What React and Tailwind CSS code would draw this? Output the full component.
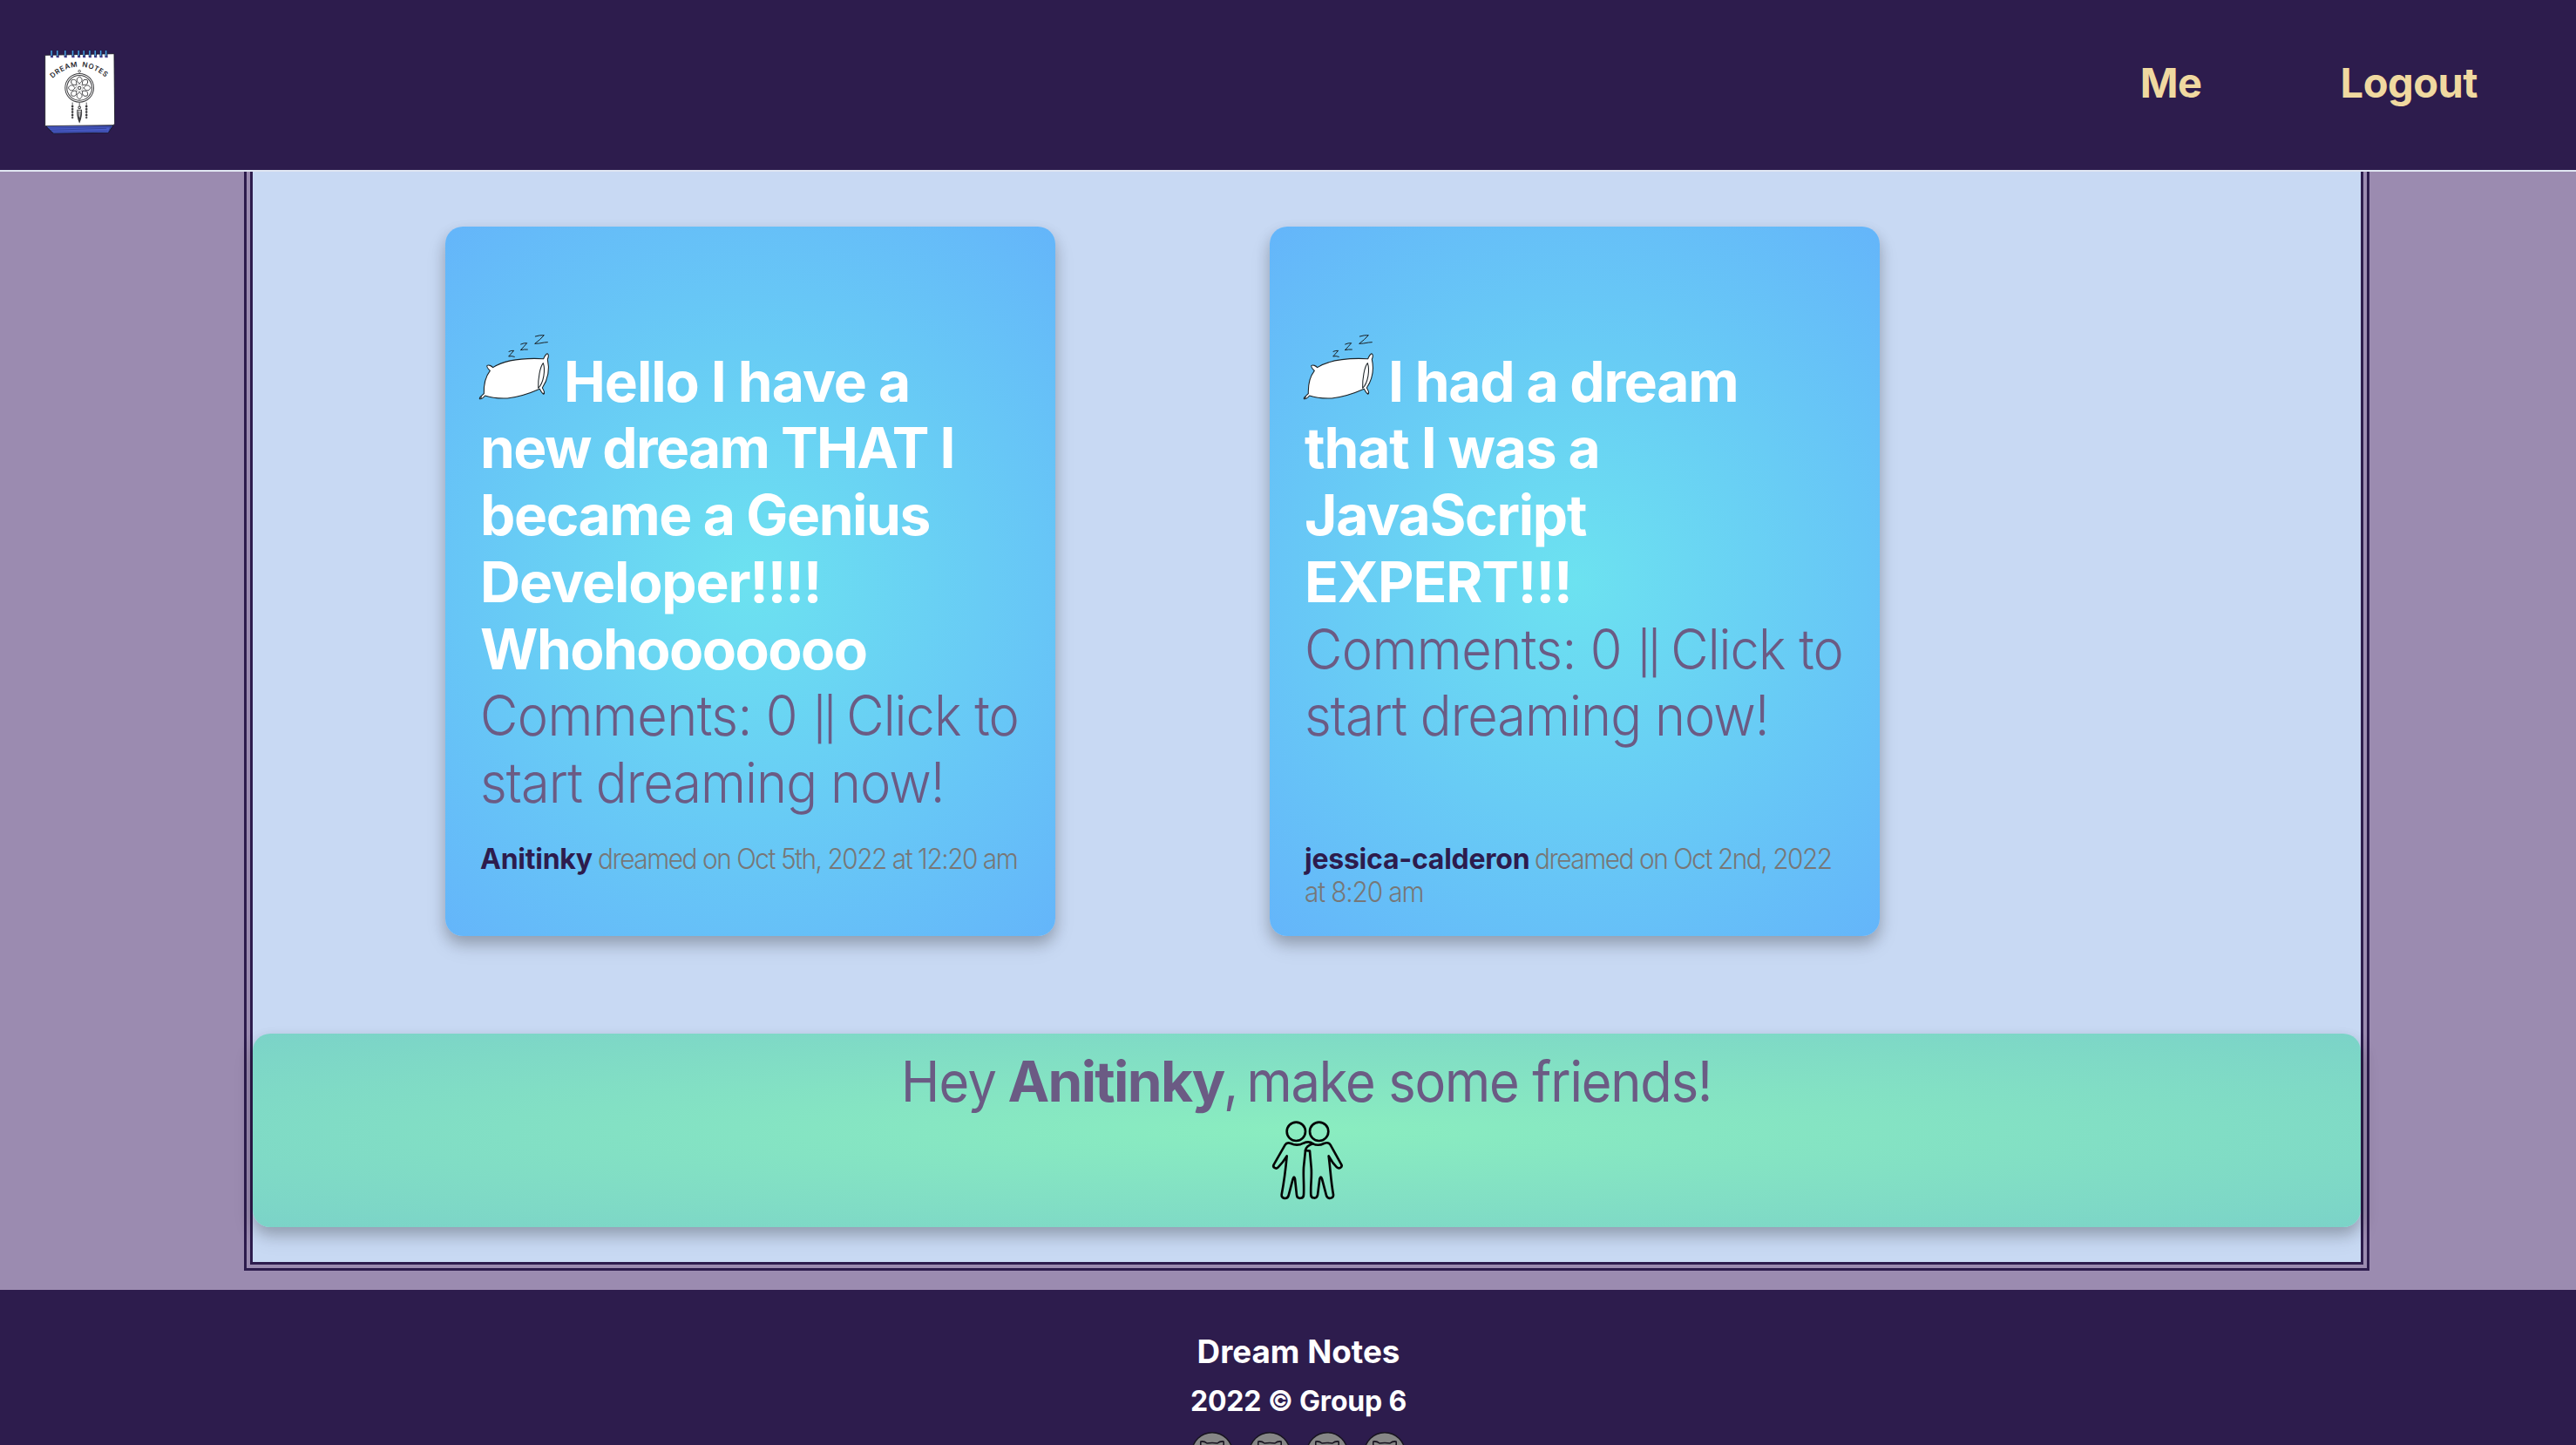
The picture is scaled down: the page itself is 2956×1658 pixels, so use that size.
function Logo() {
  const rings = [178, 198, 225, 251, 271, 289, 309, 328, 347, 365];
  return (
    <svg viewBox="150 168 248 296" className="block h-[99px] w-[83px]" aria-label="Dream Notes">
      <path d="M154 430 L184 459 L372 456 L390 430Z" fill="#4a5cc8" stroke="#1a1a33" strokeWidth="3" />
      <path d="M166 440 L384 436 M174 447 L366 441 M180 453 L370 450 M372 455 L380 434" stroke="#2a3788" strokeWidth="2" fill="none" />
      <path d="M155 190 L392 185 L394 425 L389 430 L155 433Z" fill="#fff" stroke="#1c1c28" strokeWidth="2.5" />
      {rings.map((x) => (
        <g key={x}>
          <path d={`M${x} 172 V196`} stroke="#1d2350" strokeWidth="9" />
          <path d={`M${x - 1} 174 V192`} stroke="#4a9fe0" strokeWidth="4.5" />
          <path d={`M${x - 4} 196 h9`} stroke="#4d4a9c" strokeWidth="5" />
        </g>
      ))}
      <path id="arc" d="M181 270 Q272 186 374 275" fill="none" />
      <text fontFamily="Inter, sans-serif" fontSize="24" fontWeight="600" fill="#26262c" wordSpacing="5" letterSpacing="2.2">
        <textPath href="#arc">DREAM NOTES</textPath>
      </text>
      <g fill="none" stroke="#3c3c3f">
        <circle cx="273" cy="245" r="4" strokeWidth="2.5" />
        <circle cx="273" cy="302" r="49" strokeWidth="3" />
        <circle cx="273" cy="302" r="43" strokeWidth="3" />
        <circle cx="273" cy="302" r="5" strokeWidth="3" />
        <circle cx="273" cy="302" r="12" strokeWidth="2" strokeDasharray="3 2" />
        {[0, 45, 90, 135, 180, 225, 270, 315].map((a) => (
          <path key={a} d="M273 287 C258 277 265 267 273 264 C281 267 288 277 273 287Z" strokeWidth="2.8" transform={`rotate(${a} 273 302)`} />
        ))}
        <path d="M249 352 V408 M297 352 V408 M273 352 V366" strokeWidth="2.5" />
        <path d="M249 362 V406 M297 362 V406" strokeWidth="7" strokeDasharray="6 4" />
        <circle cx="273" cy="369" r="4" strokeWidth="3" />
        <path d="M266 378 H280 Q282 398 273 420 Q264 398 266 378Z M270 382 Q268 398 273 412 Q278 398 276 382" strokeWidth="3" />
      </g>
    </svg>
  );
}

function Pillow() {
  return (
    <svg viewBox="156 30 240 240" className="mr-[2px] inline-block size-20 overflow-visible align-baseline" aria-hidden="true">
      <g fill="#fff" stroke="#1b2226" strokeWidth="3.2" strokeLinejoin="round" strokeLinecap="round">
        <path d="M200 152 C195 146 185 142 180 145 C177 149 184 157 190 163 C172 186 168 214 169 242 C164 248 152 254 154 260 C161 262 168 255 173 249 C198 258 224 259 250 258 C290 254 325 242 361 226 C364 232 369 241 374 244 C380 242 376 232 370 222 C390 192 395 155 388 124 C391 117 392 107 387 104 C381 106 378 114 374 122 C312 119 245 123 200 152Z" />
        <path d="M373 137 C362 150 355 190 356 223 C375 205 381 160 373 137Z" />
      </g>
      <path d="M154 259 L160 252 L163 256Z M371 243 L376 236 L376 243Z" fill="#1b2226" />
      <g fill="none" stroke="#1b2226" strokeWidth="3" strokeLinecap="round" strokeLinejoin="round">
        <path d="M255 97 Q264 93 272 94 L254 114 Q264 111 274 115" />
        <path d="M296 72 Q307 67 317 68 Q306 81 295 92 Q307 89 319 90" />
        <path d="M346 45 Q361 40 376 41 Q362 57 344 70 Q358 70 376 66 L388 65" />
      </g>
    </svg>
  );
}

function Friends() {
  return (
    <svg viewBox="36 36 288 288" className="mt-[2px] block size-24" fill="none" stroke="#050505" strokeWidth="8" strokeLinejoin="round" strokeLinecap="round" aria-hidden="true">
      <circle cx="142" cy="85" r="32" />
      <circle cx="221" cy="85" r="32" />
      <path d="M200 127 C190 119 178 120 167 125 C150 134 136 132 124 126 C116 123 108 124 104 131 L65 199 C60 208 72 216 80 208 C92 196 101 184 110 169 C106 215 100 260 92 302 C90 317 112 320 116 305 L131 248 Q135 236 138 248 L144 304 C146 319 168 317 168 303 C170 270 166 240 168 208 L174 150" />
      <path d="M200 127 C212 133 226 132 238 126 C248 122 256 124 260 131 L298 199 C302 208 290 215 282 208 C270 196 262 184 254 169 C260 215 262 260 270 302 C272 317 250 319 246 305 L231 248 Q227 236 223 248 L216 304 C213 318 193 316 193 303 C191 270 197 240 194 208 L189 152 L174 150 C176 138 188 131 200 127Z" />
    </svg>
  );
}

function GithubMark() {
  return (
    <svg viewBox="0 0 48 48" className="block size-12" aria-hidden="true">
      <circle cx="24" cy="24" r="23.3" fill="#868686" stroke="#17131f" strokeWidth="1.4" />
      <path d="M11 11 Q10.500 13 11 16 Q8 20 9 26 Q11 33 19 34 L18 46 H30 L29 34 Q37 33 39 26 Q40 20 37 16 Q37.500 13 37 11 Q33 10.500 30 13 Q24 12 18 13 Q15 10.500 11 11Z" fill="#868686" stroke="#17131f" strokeWidth="1.6" />
    </svg>
  );
}

function Card({ title, author, firstWhen, secondWhen }) {
  return (
    <article className="flex h-[814px] w-[700px] flex-col rounded-[20px] bg-[radial-gradient(circle,#6ce2f0_0%,#64b5fa_100%)] px-10 pt-[120.5px] pb-[30px] whitespace-nowrap shadow-[0_8px_16px_rgba(0,0,0,0.2),0_12px_24px_rgba(0,0,0,0.1)]">
      <h2 className="text-[64px] leading-[76.8px] font-bold text-white">
        {title.map(([text, tracking], i) => (
          <div key={text} className={tracking}>
            {i === 0 && <><Pillow />{" "}</>}{text}
          </div>
        ))}
      </h2>
      <div className="w-max origin-left scale-x-[0.93] text-[64px] leading-[76.8px] font-light text-[#6b5b84]">
        <div className="tracking-[-1px]">
          <span className="tracking-[-0.6px]">Comments: 0 </span>
          <span className="inline-block translate-y-[4px] scale-y-75 tracking-[-7px]">||</span>
          {" "}Click to
        </div>
        <div className="tracking-[-1px]">start dreaming now!</div>
      </div>
      <div className="mt-auto h-[77px] text-[32px] leading-[38.4px] font-light text-[#777]">
        <div className="flex gap-[6px]">
          <span className="font-bold tracking-[-0.25px] text-[#2d1c4d]">{author}</span>
          <span className="origin-left scale-x-[0.93] tracking-[-1.55px]">{firstWhen}</span>
        </div>
        {secondWhen && <div className="w-max origin-left scale-x-[0.93] tracking-[-1.2px]">{secondWhen}</div>}
      </div>
    </article>
  );
}

const dreams = [
  {
    title: [
      ["Hello I have a", "tracking-[-1.05px]"],
      ["new dream THAT I", "tracking-[-1.6px]"],
      ["became a Genius", "tracking-[-1.4px]"],
      ["Developer!!!!", "tracking-[-1.15px]"],
      ["Whohooooooo", "tracking-[-1.5px]"],
    ],
    author: "Anitinky",
    firstWhen: "dreamed on Oct 5th, 2022 at 12:20 am",
  },
  {
    title: [
      ["I had a dream", "tracking-[-1.2px]"],
      ["that I was a", "tracking-[-1.1px]"],
      ["JavaScript", "tracking-[-1.25px]"],
      ["EXPERT!!!", "tracking-[-1.06px]"],
    ],
    author: "jessica-calderon",
    firstWhen: "dreamed on Oct 2nd, 2022",
    secondWhen: "at 8:20 am",
  },
];

export default function App() {
  return (
    <div className="flex h-[1658px] w-[2956px] flex-col overflow-hidden bg-[#9b8bb0] font-['Inter',sans-serif]">
      <header className="flex h-[197px] shrink-0 items-start justify-between border-b-2 border-[#e0e6f2] bg-[#2d1c4d] pl-[50px]">
        <div className="pt-14"><Logo /></div>
        <nav className="flex gap-[159px] pt-[66px] pr-[113px] text-[47px] leading-[58px] font-bold tracking-[-0.5px] text-[#f0d9a0]">
          <a>Me</a>
          <a>Logout</a>
        </nav>
      </header>
      <main className="ml-[280px] h-[1261px] w-[2439px] shrink-0 border-[10px] border-t-0 border-double border-[#2d1c4d] bg-[#c8d9f3] bg-clip-padding pt-[63px]">
        <section className="flex gap-[246px] pl-[221px]">
          {dreams.map((d) => <Card key={d.author} {...d} />)}
        </section>
        <section className="mt-[112px] flex h-[222px] flex-col items-center rounded-[20px] bg-[radial-gradient(ellipse,#8aedc0_0%,#7bd3c8_100%)] pt-[17px] shadow-[0_8px_16px_rgba(0,0,0,0.2),0_12px_24px_rgba(0,0,0,0.1)]">
          <p className="flex text-[64px] leading-[76.8px] whitespace-nowrap text-[#6b5b84]">
            <span className="w-[123px] origin-left scale-x-[0.93] tracking-[-0.7px]">Hey </span>
            <span className="w-[247px] font-bold tracking-[-1.7px]">Anitinky</span>
            <span className="w-[562px] origin-left scale-x-[0.93] tracking-[-1.2px]"><span className="tracking-[-4px]">, </span>make some friends!</span>
          </p>
          <Friends />
        </section>
      </main>
      <footer className="mt-[22px] flex h-[178px] shrink-0 flex-col items-center bg-[#2d1c4d] pl-6 font-bold text-white">
        <h3 className="mt-[49px] text-[36.8px] leading-[44px]">Dream Notes</h3>
        <p className="mt-4 text-[32px] leading-[38px] tracking-[-0.2px]">2022 © Group 6</p>
        <div className="mt-4 flex gap-[18px]">
          <GithubMark /><GithubMark /><GithubMark /><GithubMark />
        </div>
      </footer>
    </div>
  );
}
